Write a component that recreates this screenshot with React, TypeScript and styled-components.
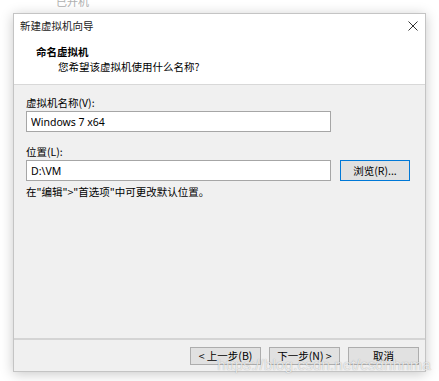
import styled, { createGlobalStyle } from 'styled-components'

const GlobalStyle = createGlobalStyle`
  html, body {
    margin: 0;
    padding: 0;
    background: #ffffff;
  }
  body {
    font-family: "Noto Sans CJK SC", "Noto Sans", sans-serif;
    font-size: 10.5px;
    color: #000;
  }
`

export default function App() {
  return (
    <Page>
      <GlobalStyle />
      <Peek>
        <span>已开机</span>
      </Peek>
      <Dialog>
        <TitleBar>
          <TitleText>新建虚拟机向导</TitleText>
          <CloseIcon width="10" height="10" viewBox="0 0 10 10">
            <path d="M0.5 0.5 L9.5 9.5 M9.5 0.5 L0.5 9.5" stroke="#333" strokeWidth="1" />
          </CloseIcon>
        </TitleBar>
        <Header>
          <HeaderTitle>命名虚拟机</HeaderTitle>
          <HeaderSub>您希望该虚拟机使用什么名称?</HeaderSub>
        </Header>
        <Body>
          <Field>
            <Label>虚拟机名称(V):</Label>
            <Input value="Windows 7 x64" readOnly />
          </Field>
          <Field>
            <Label>位置(L):</Label>
            <Row>
              <Input value="D:\VM" readOnly />
              <Button isDefault>浏览(R)...</Button>
            </Row>
          </Field>
          <Hint>在"编辑"&gt;"首选项"中可更改默认位置。</Hint>
        </Body>
        <Footer>
          <Button wide>&lt; 上一步(B)</Button>
          <Button wide>下一步(N) &gt;</Button>
          <Button wide>取消</Button>
        </Footer>
        <Watermark>https://blog.csdn.net/csdnhnma</Watermark>
      </Dialog>
    </Page>
  )
}

type ButtonProps = {
  isDefault?: boolean
  wide?: boolean
}

const Page = styled.div`
  width: 439px;
  height: 381px;
  overflow: hidden;
  display: flex;
  flex-direction: column;
`

const Peek = styled.div`
  height: 13px;
  overflow: hidden;
  padding-left: 56px;

  span {
    display: block;
    margin-top: -6px;
    color: #b0b0b0;
    font-size: 11px;
    line-height: 14px;
  }
`

const Dialog = styled.div`
  position: relative;
  margin: 0 13px 0 13px;
  height: 359px;
  border: 1px solid #c4c4c4;
  box-sizing: border-box;
  background: #ffffff;
  box-shadow: 0 2px 12px rgba(0, 0, 0, 0.22);
  display: flex;
  flex-direction: column;
`

const TitleBar = styled.div`
  height: 23px;
  display: flex;
  align-items: center;
  justify-content: space-between;
  padding: 0 7px 0 6px;
`

const TitleText = styled.span`
  color: #222;
  line-height: 14px;
`

const CloseIcon = styled.svg`
  display: block;
  margin-top: 1px;
`

const Header = styled.div`
  height: 48px;
  padding: 8px 0 0 22px;
  box-sizing: border-box;
  border-bottom: 1px solid #d8d8d8;
  display: flex;
  flex-direction: column;
  gap: 1px;
`

const HeaderTitle = styled.div`
  font-weight: bold;
  line-height: 14px;
`

const HeaderSub = styled.div`
  padding-left: 22px;
  line-height: 14px;
`

const Body = styled.div`
  flex: 1;
  background: #f0f0f0;
  padding: 11px 12px 0 12px;
  display: flex;
  flex-direction: column;
  gap: 13px;
  border-bottom: 2px solid #d4d4d4;
`

const Field = styled.div`
  display: flex;
  flex-direction: column;
  gap: 1px;
`

const Label = styled.div`
  line-height: 14px;
`

const Row = styled.div`
  display: flex;
  gap: 9px;
  align-items: stretch;
`

const Input = styled.input`
  width: 305px;
  height: 21px;
  box-sizing: border-box;
  border: 1px solid #a6a6a6;
  background: #ffffff;
  padding: 0 4px;
  font-family: "Noto Sans", "Noto Sans CJK SC", sans-serif;
  font-size: 10.5px;
  color: #000;
  outline: none;
`

const Button = styled.div<ButtonProps>`
  width: ${props => (props.wide ? '71px' : '70px')};
  height: ${props => (props.wide ? '18px' : '21px')};
  box-sizing: border-box;
  display: flex;
  align-items: center;
  justify-content: center;
  background: #e1e1e1;
  border: 1px solid ${props => (props.isDefault ? '#0078d7' : '#adadad')};
  line-height: 14px;
  white-space: nowrap;
`

const Hint = styled.div`
  margin-top: -9px;
  line-height: 14px;
`

const Footer = styled.div`
  height: 31px;
  display: flex;
  justify-content: flex-end;
  align-items: flex-start;
  padding: 7px 6px 0 0;
  box-sizing: border-box;
  gap: 8px;
  background: #f0f0f0;
`

const Watermark = styled.div`
  position: absolute;
  right: -6px;
  bottom: -2px;
  font-family: "Liberation Sans", sans-serif;
  font-size: 15px;
  letter-spacing: 0.2px;
  color: rgba(255, 255, 255, 0.75);
  text-shadow: 0 0 1px rgba(0, 0, 0, 0.35);
  pointer-events: none;
`
